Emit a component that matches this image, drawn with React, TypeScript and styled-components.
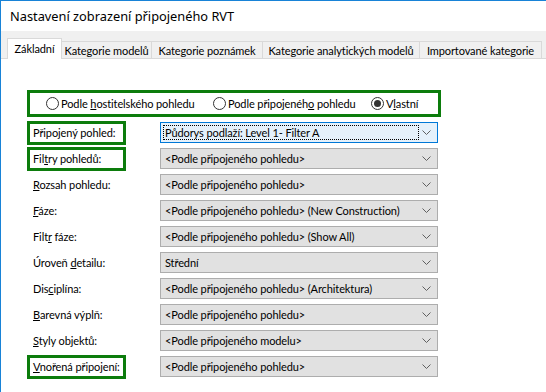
import styled, { createGlobalStyle } from "styled-components";

const GlobalStyle = createGlobalStyle`
  html, body {
    margin: 0;
    padding: 0;
    background: #fff;
  }
  body {
    font-family: Lato, "Noto Sans", sans-serif;
    font-size: 11px;
    letter-spacing: -0.1px;
    color: #000;
  }
`;

const Window = styled.div`
  width: 546px;
  height: 392px;
  box-sizing: border-box;
  border-left: 1px solid #1883d7;
  border-top: 1px solid #1883d7;
  background: #fff;
  overflow: hidden;
  display: flex;
  flex-direction: column;
`;

const TitleBar = styled.div`
  height: 30px;
  flex-shrink: 0;
  display: flex;
  align-items: center;
  padding-left: 9px;
  font-family: "Noto Sans", sans-serif;
  font-size: 12.8px;
  letter-spacing: 0;
`;

const TabStrip = styled.div`
  height: 28px;
  flex-shrink: 0;
  box-sizing: border-box;
  background: #f0f0f0;
  border-bottom: 1px solid #d9d9d9;
  display: flex;
  align-items: flex-end;
  padding-left: 6px;
`;

const Tab = styled.div<{ $active?: boolean; $w: number }>`
  box-sizing: border-box;
  width: ${(p) => p.$w}px;
  flex-shrink: 0;
  height: ${(p) => (p.$active ? 21 : 17)}px;
  margin-bottom: ${(p) => (p.$active ? -1 : 0)}px;
  margin-left: ${(p) => (p.$active ? 0 : -1)}px;
  border: 1px solid #d9d9d9;
  border-bottom: none;
  background: ${(p) => (p.$active ? "#fff" : "#f0f0f0")};
  display: flex;
  align-items: center;
  justify-content: center;
  white-space: nowrap;
  padding-bottom: ${(p) => (p.$active ? 2 : 0)}px;
`;

const Panel = styled.div`
  flex: 1;
  padding: 31px 0 0 26px;
`;

const RadioGroup = styled.div`
  box-sizing: border-box;
  width: 414px;
  height: 27px;
  border: 3px solid #0c7c0c;
  display: flex;
  align-items: center;
  padding-left: 16px;
`;

const RadioItem = styled.label<{ $w?: number }>`
  display: flex;
  align-items: center;
  gap: 2px;
  flex-shrink: 0;
  width: ${(p) => (p.$w ? `${p.$w}px` : "auto")};
  white-space: nowrap;
`;

const RadioCircle = styled.span<{ $checked?: boolean }>`
  box-sizing: border-box;
  flex-shrink: 0;
  width: 13px;
  height: 13px;
  border-radius: 50%;
  border: 1px solid #333;
  background: #fff;
  display: flex;
  align-items: center;
  justify-content: center;
  &::after {
    content: "";
    display: ${(p) => (p.$checked ? "block" : "none")};
    width: 7px;
    height: 7px;
    border-radius: 50%;
    background: #333;
  }
`;

const Rows = styled.div`
  margin-top: 5px;
  padding-left: 3px;
  display: flex;
  flex-direction: column;
  gap: 5px;
`;

const Row = styled.div`
  display: grid;
  grid-template-columns: 130px 278px;
  height: 21px;
  align-items: center;
`;

const FieldLabel = styled.div<{ $marked?: boolean }>`
  box-sizing: border-box;
  width: 93px;
  height: 18px;
  padding-left: 3px;
  display: flex;
  align-items: center;
  white-space: nowrap;
  outline: ${(p) => (p.$marked ? "3px solid #0c7c0c" : "none")};
`;

const Combo = styled.div<{ $focused?: boolean }>`
  box-sizing: border-box;
  height: 21px;
  border: 1px solid ${(p) => (p.$focused ? "#0078d7" : "#adadad")};
  background: ${(p) => (p.$focused ? "#e5f1fb" : "#e1e1e1")};
  display: flex;
  align-items: center;
  padding: 0 6px 0 2px;
`;

const ComboText = styled.span<{ $focused?: boolean }>`
  flex: ${(p) => (p.$focused ? "0 0 256px" : "1")};
  box-sizing: border-box;
  height: 15px;
  display: flex;
  align-items: center;
  padding-left: 1px;
  border: 1px dotted ${(p) => (p.$focused ? "#000" : "transparent")};
  white-space: nowrap;
  overflow: hidden;
`;

const Chevron = styled.svg`
  margin-left: auto;
  flex-shrink: 0;
`;

const Arrow = () => (
  <Chevron width="9" height="5" viewBox="0 0 9 5">
    <polyline points="0.5,0.5 4.5,4.5 8.5,0.5" fill="none" stroke="#606060" strokeWidth="1" />
  </Chevron>
);

type Field = {
  label: React.ReactNode;
  value: string;
  marked?: boolean;
  focused?: boolean;
};

const fields: Field[] = [
  { label: <>Připo<u>j</u>ený pohled:</>, value: "Půdorys podlaží: Level 1- Filter A", marked: true, focused: true },
  { label: <>Fil<u>t</u>ry pohledů:</>, value: "<Podle připojeného pohledu>", marked: true },
  { label: <><u>R</u>ozsah pohledu:</>, value: "<Podle připojeného pohledu>" },
  { label: <><u>F</u>áze:</>, value: "<Podle připojeného pohledu> (New Construction)" },
  { label: <>Filt<u>r</u> fáze:</>, value: "<Podle připojeného pohledu> (Show All)" },
  { label: <>Úroveň <u>d</u>etailu:</>, value: "Střední" },
  { label: <>Dis<u>c</u>iplína:</>, value: "<Podle připojeného pohledu> (Architektura)" },
  { label: <><u>B</u>arevná výplň:</>, value: "<Podle připojeného pohledu>" },
  { label: <><u>S</u>tyly objektů:</>, value: "<Podle připojeného modelu>" },
  { label: <><u>V</u>nořená připojení:</>, value: "<Podle připojeného pohledu>", marked: true },
];

const tabs = [
  { name: "Základní", w: 55, active: true },
  { name: "Kategorie modelů", w: 91 },
  { name: "Kategorie poznámek", w: 112 },
  { name: "Kategorie analytických modelů", w: 158 },
  { name: "Importované kategorie", w: 123 },
];

function App() {
  return (
    <>
      <GlobalStyle />
      <Window>
        <TitleBar>Nastavení zobrazení připojeného RVT</TitleBar>
        <TabStrip>
          {tabs.map((t) => (
            <Tab key={t.name} $active={t.active} $w={t.w}>
              {t.name}
            </Tab>
          ))}
        </TabStrip>
        <Panel>
          <RadioGroup>
            <RadioItem $w={167}>
              <RadioCircle />
              <span>Podle <u>h</u>ostitelského pohledu</span>
            </RadioItem>
            <RadioItem $w={158}>
              <RadioCircle />
              <span>Podle připojenéh<u>o</u> pohledu</span>
            </RadioItem>
            <RadioItem>
              <RadioCircle $checked />
              <span>V<u>l</u>astní</span>
            </RadioItem>
          </RadioGroup>
          <Rows>
            {fields.map((f, i) => (
              <Row key={i}>
                <FieldLabel $marked={f.marked}>
                  <span>{f.label}</span>
                </FieldLabel>
                <Combo $focused={f.focused}>
                  <ComboText $focused={f.focused}>
                    <span>{f.value}</span>
                  </ComboText>
                  <Arrow />
                </Combo>
              </Row>
            ))}
          </Rows>
        </Panel>
      </Window>
    </>
  );
}

export default App;
